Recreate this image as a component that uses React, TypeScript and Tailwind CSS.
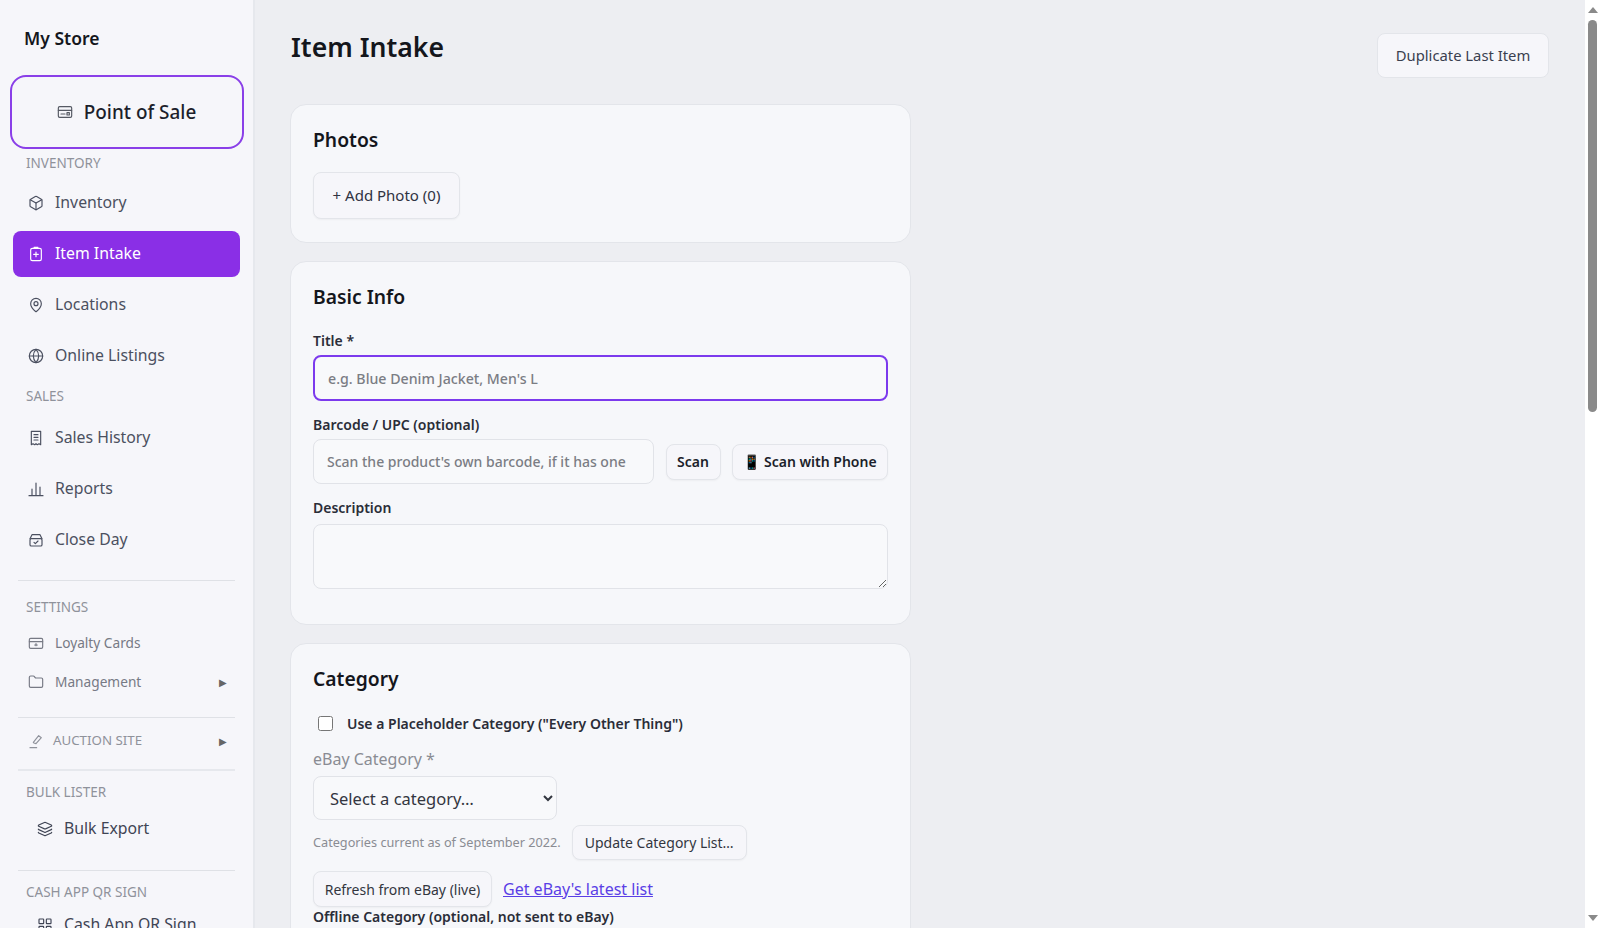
import type { ReactNode } from 'react'
import { Box, Folder, Globe, Layers, MapPin } from 'lucide-react'

const font = '[font-family:"Noto_Sans",sans-serif]'

function Svg({ children, size = 16 }: { children: ReactNode; size?: number }) {
  return (
    <svg width={size} height={size} viewBox="0 0 24 24" fill="none" stroke="currentColor" strokeWidth="1.75" strokeLinecap="round" strokeLinejoin="round" className="shrink-0">
      {children}
    </svg>
  )
}

const PosIcon = () => (
  <Svg>
    <rect x="2" y="4" width="20" height="16" rx="2" />
    <path d="M2 9.5h20M6 15h6" />
    <rect x="15" y="13" width="3.5" height="3.5" />
  </Svg>
)
const IntakeIcon = () => (
  <Svg>
    <rect x="4" y="3.5" width="16" height="18.5" rx="2.5" />
    <path d="M9 2h6M12 9v7M8.5 12.5h7" />
  </Svg>
)
const ReceiptIcon = () => (
  <Svg>
    <path d="M5 2h14v20l-2.5-1.5L14 22l-2-1.5L10 22l-2.5-1.5L5 22z" />
    <path d="M9 7h6M9 11h6M9 15h6" />
  </Svg>
)
const BarsIcon = () => (
  <Svg>
    <path d="M1.5 22h21M6 22V12M12 22V3M18 22V9" />
  </Svg>
)
const CloseDayIcon = () => (
  <Svg>
    <path d="M3 10l3-6h12l3 6" />
    <rect x="3" y="10" width="18" height="11" rx="2" />
    <path d="M9 15.5l2 2 4-4" />
  </Svg>
)
const LoyaltyIcon = () => (
  <Svg>
    <rect x="2" y="5" width="20" height="15" rx="2" />
    <path d="M2 10h20M12 13v3M10 15h4" />
  </Svg>
)
const GavelIcon = () => (
  <Svg>
    <path d="M3 22h10M9 15l-1-1 8-10 4 3-8 9z" />
  </Svg>
)
const QrIcon = () => (
  <Svg>
    <rect x="3" y="3" width="7" height="7" rx="1" />
    <rect x="14" y="3" width="7" height="7" rx="1" />
    <rect x="3" y="14" width="7" height="7" rx="1" />
    <rect x="14" y="14" width="7" height="7" rx="1" />
  </Svg>
)

function NavItem({ icon, label, active }: { icon: ReactNode; label: string; active?: boolean }) {
  return (
    <div className={`mx-[13px] h-[46px] mb-[5px] px-[15px] rounded-lg flex items-center gap-[11px] text-[15.8px] ${active ? 'bg-[#8a2fe6] text-white' : 'text-[#4b5060]'}`}>
      {icon}
      <span>{label}</span>
    </div>
  )
}

function SectionLabel({ children, className = '' }: { children: ReactNode; className?: string }) {
  return <div className={`px-[26px] text-[13.5px] leading-[18px] text-[#8f929b] ${className}`}>{children}</div>
}

function SubItem({ icon, label, arrow }: { icon: ReactNode; label: string; arrow?: boolean }) {
  return (
    <div className="h-[39px] pl-[28px] pr-[26px] flex items-center gap-[11px] text-[13.7px] text-[#777a85]">
      {icon}
      <span className="flex-1">{label}</span>
      {arrow && <span className="text-[10px] text-[#666]">▶</span>}
    </div>
  )
}

function Sidebar() {
  return (
    <aside className="h-full w-[255px] shrink-0 overflow-hidden bg-[#f6f6fa] border-r-2 border-[#e6e8ed]">
      <div className="pl-[24px] pt-[26px] h-[75px] text-[17.5px] leading-[24px] font-semibold text-[#14161c]">My Store</div>
      <div className="mx-[9.5px] h-[74px] rounded-2xl border-2 border-[#8a3fe8] flex items-center justify-center gap-[11px] text-[18.9px] font-medium text-[#1c1f2b]">
        <span className="text-[#555963]"><PosIcon /></span>
        Point of Sale
      </div>
      <SectionLabel className="mt-[5px] mb-[8px]">INVENTORY</SectionLabel>
      <NavItem icon={<Box size={16} strokeWidth={1.75} />} label="Inventory" />
      <NavItem active icon={<IntakeIcon />} label="Item Intake" />
      <NavItem icon={<MapPin size={16} strokeWidth={1.75} />} label="Locations" />
      <NavItem icon={<Globe size={16} strokeWidth={1.75} />} label="Online Listings" />
      <SectionLabel className="mt-[8px] mb-[9.5px]">SALES</SectionLabel>
      <NavItem icon={<ReceiptIcon />} label="Sales History" />
      <NavItem icon={<BarsIcon />} label="Reports" />
      <NavItem icon={<CloseDayIcon />} label="Close Day" />
      <div className="mx-[18px] mt-[17px] border-t border-[#dfe1e6]" />
      <SectionLabel className="mt-[17px] mb-[8px]">SETTINGS</SectionLabel>
      <SubItem icon={<LoyaltyIcon />} label="Loyalty Cards" />
      <SubItem icon={<Folder size={16} strokeWidth={1.75} />} label="Management" arrow />
      <div className="mx-[18px] mt-[15px] border-t border-[#dfe1e6]" />
      <div className="h-[51px] pb-[4px] pl-[28px] pr-[26px] flex items-center gap-[9px] text-[13.3px] text-[#8f929b]">
        <GavelIcon />
        <span className="flex-1">AUCTION SITE</span>
        <span className="text-[10px] text-[#666]">▶</span>
      </div>
      <div className="mx-[18px] border-t-2 border-[#e6e8ed]" />
      <SectionLabel className="mt-[12px] mb-[5px]">BULK LISTER</SectionLabel>
      <div className="h-[46px] pl-[37px] flex items-center gap-[11px] text-[15.8px] text-[#3f4454]">
        <Layers size={16} strokeWidth={1.75} />
        Bulk Export
      </div>
      <div className="mx-[18px] mt-[18px] border-t border-[#dfe1e6]" />
      <SectionLabel className="mt-[12px] mb-[1px]">CASH APP QR SIGN</SectionLabel>
      <div className="h-[46px] pl-[37px] flex items-center gap-[11px] text-[15.8px] text-[#3f4454]">
        <QrIcon />
        Cash App QR Sign
      </div>
    </aside>
  )
}

function Scrollbar() {
  return (
    <div className="w-[15px] h-full shrink-0 bg-white flex flex-col items-center">
      <div className="mt-[7px] w-0 h-0 border-x-[5px] border-x-transparent border-b-[6px] border-b-[#8a8a8a]" />
      <div className="mt-[7px] w-[9px] h-[392px] rounded-full bg-[#8a8a8a]" />
      <div className="mt-auto mb-[7px] w-0 h-0 border-x-[5px] border-x-transparent border-t-[6px] border-t-[#8a8a8a]" />
    </div>
  )
}

const softBtn = 'rounded-lg border border-[#e3e5ea] bg-[#f6f6fa] shadow-[0_1px_2px_rgba(0,0,0,0.04)]'

function Card({ title, className = '', children }: { title: string; className?: string; children: ReactNode }) {
  return (
    <section className={`rounded-2xl border border-[#e3e5ea] bg-[#f6f7fa] px-[22px] pt-[21px] mb-[18px] ${className}`}>
      <h2 className="text-[19.3px] leading-[27px] font-semibold text-[#14161c]">{title}</h2>
      {children}
    </section>
  )
}

export default function App() {
  return (
    <div className={`flex h-screen overflow-hidden bg-[#edeef2] ${font}`}>
      <Sidebar />
      <main className="flex-1 min-w-0 overflow-hidden pl-[35px] pr-[36px]">
        <div className="flex items-start justify-between">
          <h1 className="mt-[27px] ml-[1px] text-[26.6px] leading-[40px] font-semibold text-[#14161c]">Item Intake</h1>
          <button className="mt-[33px] h-[45px] w-[172px] rounded-lg border border-[#e3e5ea] bg-[#f6f6fa] text-[14.8px] text-[#3a3f50]">
            Duplicate Last Item
          </button>
        </div>
        <div className="w-[621px] mt-[26px]">
          <Card title="Photos" className="h-[139px]">
            <button className={`mt-[19px] h-[47px] w-[147px] text-[15px] text-[#2f3342] ${softBtn}`}>+ Add Photo (0)</button>
          </Card>
          <Card title="Basic Info" className="h-[364px]">
            <label className="block mt-[21px] text-[14px] leading-[20px] font-semibold text-[#2a2d38]">Title *</label>
            <input
              placeholder="e.g. Blue Denim Jacket, Men's L"
              className="block mt-[4px] w-full h-[46px] px-[13px] rounded-lg border-2 border-[#7c3aed] bg-[#f8f9fb] text-[14.2px] font-medium outline-none placeholder:text-[#7b7d84]"
            />
            <label className="block mt-[14px] text-[14px] leading-[20px] font-semibold text-[#2a2d38]">Barcode / UPC (optional)</label>
            <div className="flex items-center mt-[4px] gap-[11.5px]">
              <input
                placeholder="Scan the product's own barcode, if it has one"
                className="w-[341px] h-[45px] px-[13px] rounded-lg border border-[#e1e3e8] bg-[#f8f9fb] text-[14px] font-medium outline-none placeholder:text-[#7b7d84]"
              />
              <button className={`h-[36px] w-[55px] text-[14px] font-semibold text-[#1c1f2b] ${softBtn}`}>Scan</button>
              <button className={`h-[36px] w-[156px] text-[14px] font-semibold text-[#1c1f2b] ${softBtn}`}>📱 Scan with Phone</button>
            </div>
            <label className="block mt-[14px] text-[14px] leading-[20px] font-semibold text-[#2a2d38]">Description</label>
            <textarea className="block mt-[6px] w-full h-[65px] rounded-lg border border-[#e1e3e8] bg-[#f8f9fb] outline-none" />
          </Card>
          <Card title="Category">
            <label className="flex items-center mt-[21px] ml-[5px] h-[20px] gap-[14px] text-[14px] font-semibold text-[#2a2d38]">
              <input type="checkbox" className="w-[15px] h-[15px]" />
              Use a Placeholder Category ("Every Other Thing")
            </label>
            <div className="mt-[15px] text-[16px] leading-[22px] text-[#8a8c93]">eBay Category *</div>
            <select className="block mt-[6px] w-[244px] h-[44px] px-[12px] rounded-lg border border-[#e1e3e8] bg-[#f8f9fb] text-[16.5px] text-[#33363f]">
              <option>Select a category…</option>
            </select>
            <div className="flex items-center mt-[5px] gap-[11px]">
              <span className="text-[12.7px] text-[#8a8c93]">Categories current as of September 2022.</span>
              <button className={`h-[35px] w-[175px] text-[14px] text-[#33363f] ${softBtn}`}>Update Category List…</button>
            </div>
            <div className="flex items-center mt-[11px] gap-[11px]">
              <button className={`h-[36px] w-[179px] text-[14px] text-[#33363f] ${softBtn}`}>Refresh from eBay (live)</button>
              <a href="#" className="text-[16px] text-[#5a3fe6] underline">Get eBay's latest list</a>
            </div>
            <label className="block mt-[0px] text-[14px] leading-[20px] font-semibold text-[#2a2d38]">Offline Category (optional, not sent to eBay)</label>
            <div className="h-[300px]" />
          </Card>
        </div>
      </main>
      <Scrollbar />
    </div>
  )
}
